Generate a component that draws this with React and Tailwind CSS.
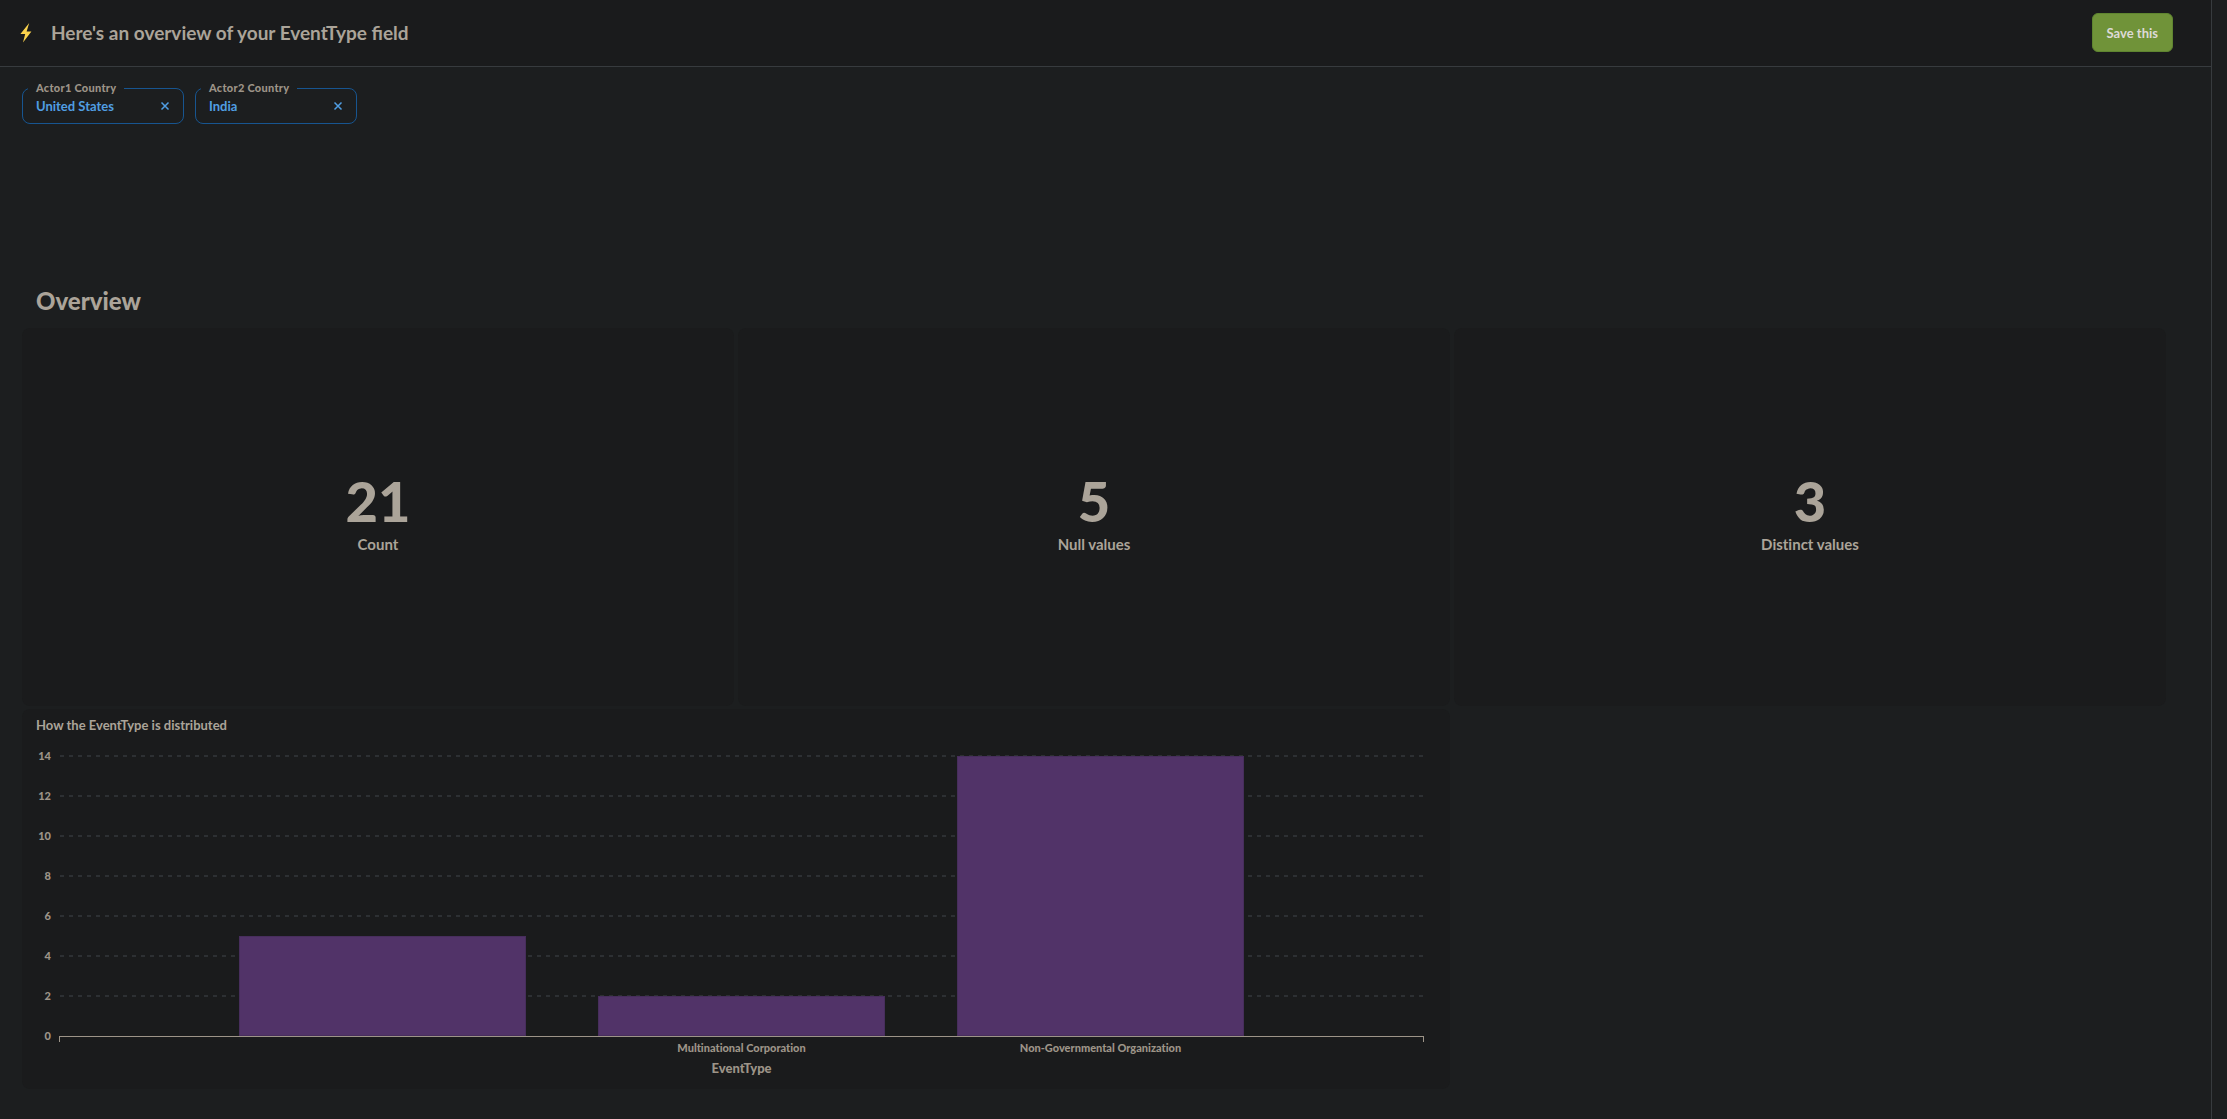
const STATS = [
  { value: 21, label: "Count" },
  { value: 5, label: "Null values" },
  { value: 3, label: "Distinct values" },
];

const FILTERS = [
  { label: "Actor1 Country", value: "United States" },
  { label: "Actor2 Country", value: "India" },
];

const BARS = [
  { label: "", value: 5 },
  { label: "Multinational Corporation", value: 2 },
  { label: "Non-Governmental Organization", value: 14 },
];

const TICKS = [14, 12, 10, 8, 6, 4, 2, 0];

function Bolt() {
  return (
    <svg viewBox="0 0 12 20" className="h-5 w-3 shrink-0" fill="#fbd34d" aria-hidden="true">
      <path d="M9.2 0 0.4 11h4.8L3 19.4 11.4 8.4H6.6z" />
    </svg>
  );
}

function Filter({ label, value }) {
  return (
    <fieldset className="h-[42px] w-[162px] rounded-lg border border-[#175590] pr-3 pl-[5px]">
      <legend className="h-3 px-2 text-[11px] leading-3 font-black tracking-wide text-[#9d9488]">{label}</legend>
      <div className="mt-1 flex h-4 items-center justify-between pl-2 text-[13px] leading-4 font-bold text-[#509ee3]">
        <span>{value}</span>
        <button type="button" aria-label={"Clear " + label} className="p-px">
          <svg viewBox="0 0 10 10" className="size-[10px]" stroke="currentColor" strokeWidth="1.5" aria-hidden="true">
            <path d="M1.5 1.5l7 7M8.5 1.5l-7 7" />
          </svg>
        </button>
      </div>
    </fieldset>
  );
}

function Stat({ value, label }) {
  return (
    <section className="flex h-[378px] flex-col items-center justify-center rounded-lg bg-[#1a1b1c] pb-[5px]">
      <div className="mb-[3px] text-[56px] leading-[56px] font-black">{value}</div>
      <h3 className="text-[15px] leading-6 font-bold [font-variant-ligatures:none]">{label}</h3>
    </section>
  );
}

function Chart() {
  return (
    <section className="col-span-2 flex h-[380px] flex-col rounded-lg bg-[#1a1b1c] pt-2 pr-[26px] pl-[14px]">
      <h3 className="text-[13px] leading-4 font-bold">How the EventType is distributed</h3>
      <div className="mt-[15px] flex text-[11px] leading-4 font-black text-[#9d9488] [font-variant-ligatures:none]">
        <div className="flex h-[296px] w-[15px] flex-col justify-between text-right">
          {TICKS.map((t) => (
            <span key={t}>{t}</span>
          ))}
        </div>
        <div className="ml-2 flex-1 pt-2">
          <div className="relative h-[280px]">
            <svg className="absolute inset-0 size-full overflow-visible" aria-hidden="true">
              {TICKS.slice(0, -1).map((t, i) => (
                <line
                  key={t}
                  x1="1"
                  x2="100%"
                  y1={i * 40}
                  y2={i * 40}
                  stroke="#2d3033"
                  strokeWidth="2"
                  strokeDasharray="4 5"
                />
              ))}
            </svg>
            <div className="relative flex h-full items-end px-[10.55%]">
              {BARS.map((b) => (
                <div key={b.value} className="flex flex-1 justify-center">
                  <div
                    className="w-4/5 border border-[#472e5c] bg-[#513368]"
                    style={{ height: b.value * 20 }}
                  />
                </div>
              ))}
            </div>
          </div>
          <div className="h-[6px] border-x border-t border-[#9d9488]" />
          <div className="-mt-0.5 flex px-[10.55%] text-center">
            {BARS.map((b) => (
              <span key={b.value} className="flex-1">{b.label}</span>
            ))}
          </div>
          <div className="mt-1 text-center text-[13px] leading-4 font-black">EventType</div>
        </div>
      </div>
    </section>
  );
}

export default function App() {
  return (
    <div className="min-h-screen bg-[#1c1e1f] pr-[15px] font-['Lato',sans-serif] text-[#aba499]">
      <div className="min-h-screen border-r border-[#373b3e]">
        <header className="flex h-[67px] items-center justify-between border-b border-[#373b3e] bg-[#1a1b1c] pr-[38px] pb-px pl-5">
          <div className="flex items-center gap-[19px]">
            <Bolt />
            <h1 className="text-[19px] leading-6 font-bold">Here's an overview of your EventType field</h1>
          </div>
          <button
            type="button"
            className="h-[39px] rounded-md border border-[#5f8530] bg-[#709339] px-[14px] text-[13px] leading-4 font-bold text-[#dddad6]"
          >
            Save this
          </button>
        </header>
        <div className="flex gap-[11px] pt-[15px] pl-[22px]">
          {FILTERS.map((f) => (
            <Filter key={f.label} {...f} />
          ))}
        </div>
        <main className="pt-[161px] pr-[45px] pl-[22px]">
          <h2 className="pl-[14px] text-2xl leading-8 font-black">Overview</h2>
          <div className="mt-[11px] grid grid-cols-3 gap-x-1 gap-y-[3px]">
            {STATS.map((s) => (
              <Stat key={s.label} {...s} />
            ))}
            <Chart />
          </div>
        </main>
      </div>
    </div>
  );
}
